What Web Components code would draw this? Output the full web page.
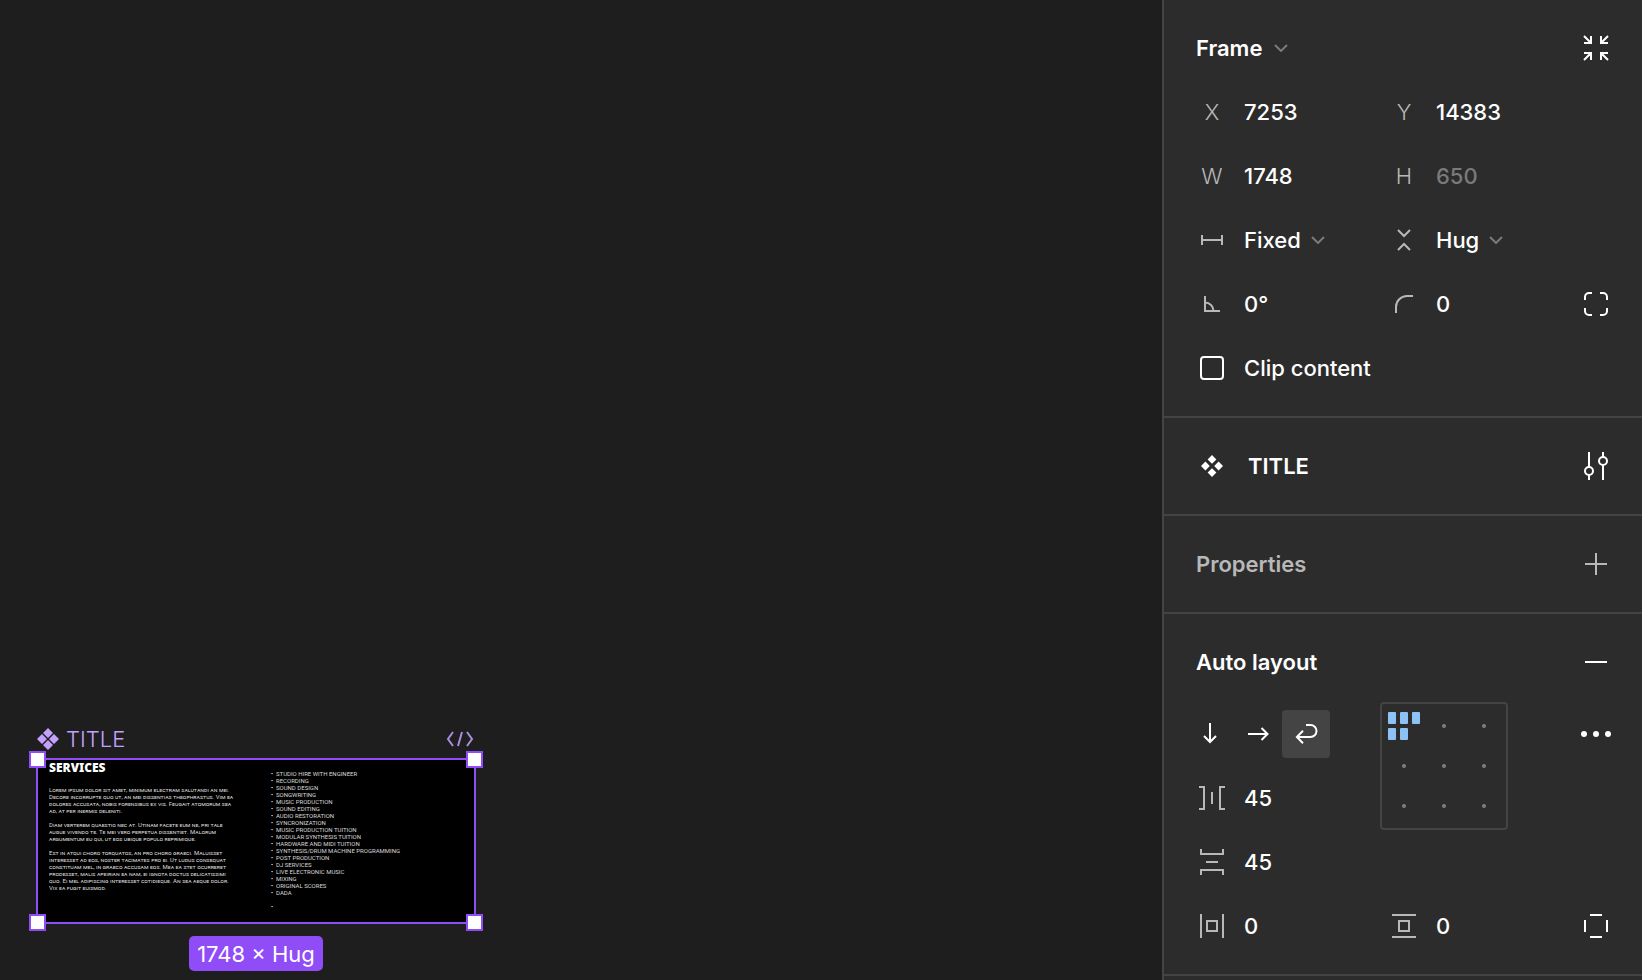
<!DOCTYPE html>
<html lang="en">
<head>
<meta charset="utf-8">
<meta name="viewport" content="width=device-width, initial-scale=1">
<title>Design editor</title>
<style>
  :root {
    --panel: #2c2c2c; --canvas: #1e1e1e; --line: #444444;
    --text: #ffffff; --muted: #b8b8b8; --dim: #7a7a7a;
    --accent: #8f4cf7; --accent-soft: #c4a1ff; --align: #8cc2f5;
  }
  body { margin: 0; background: var(--canvas); color: var(--text); font: 450 22px/32px Inter, "Liberation Sans", sans-serif; }
</style>
</head>
<body>
<editor-shell>
  <design-canvas>
    <canvas-node name="TITLE" size="1748 × Hug" style="--x: 36px; --y: 724px">
      <service-copy></service-copy>
    </canvas-node>
  </design-canvas>

  <inspector-panel slot="panel">
    <panel-section>
      <section-head><pick-list label="Layer type" value="Frame" options="Frame,Group,Section"></pick-list>
        <icon-button slot="action" icon="collapse" label="Resize to fit"></icon-button></section-head>
      <field-grid>
        <value-field letter="X" label="X position" value="7253"></value-field>
        <value-field letter="Y" label="Y position" value="14383"></value-field><span></span>
        <value-field letter="W" label="Width" value="1748"></value-field>
        <value-field letter="H" label="Height" value="650" off></value-field><span></span>
        <pick-list icon="fixed" label="Horizontal resizing" value="Fixed" options="Fixed,Hug"></pick-list>
        <pick-list icon="hug" label="Vertical resizing" value="Hug" options="Hug,Fixed"></pick-list><span></span>
        <value-field icon="angle" label="Rotation" value="0°"></value-field>
        <value-field icon="radius" label="Corner radius" value="0"></value-field>
        <icon-button icon="corners" label="Independent corners"></icon-button>
        <check-field>Clip content</check-field>
      </field-grid>
    </panel-section>
    <panel-section>
      <section-head icon="component">TITLE
        <icon-button slot="action" icon="sliders" label="Configure component"></icon-button></section-head>
    </panel-section>
    <panel-section>
      <section-head quiet>Properties
        <icon-button slot="action" icon="plus" label="Add property" quiet></icon-button></section-head>
    </panel-section>
    <panel-section>
      <section-head>Auto layout
        <icon-button slot="action" icon="minus" label="Remove auto layout"></icon-button></section-head>
      <field-grid spaced>
        <flow-switch></flow-switch>
        <align-box></align-box>
        <icon-button icon="more" label="Advanced layout"></icon-button>
        <value-field class="first" icon="hgap" label="Horizontal gap" value="45"></value-field><span></span>
        <value-field class="first" icon="vgap" label="Vertical gap" value="45"></value-field><span></span><span></span>
        <value-field icon="hpad" label="Horizontal padding" value="0"></value-field>
        <value-field icon="vpad" label="Vertical padding" value="0"></value-field>
        <icon-button icon="sides" label="Independent padding"></icon-button>
      </field-grid>
    </panel-section>
  </inspector-panel>
</editor-shell>

<script>
const ICONS = {
  collapse: '<path d="M4 4l7 7M11 4v7H4M28 4l-7 7M21 4v7h7M4 28l7-7M11 28v-7H4M28 28l-7-7M21 28v-7h7"/>',
  fixed: '<path d="M6 11v10M26 11v10M6 16h20"/>',
  hug: '<path d="M10 6l6 6 6-6M10 26l6-6 6 6"/>',
  angle: '<path d="M9 8v15h15M9 14.5a8.5 8.5 0 0 1 8.5 8.5"/>',
  radius: '<path d="M8 25v-6A11 11 0 0 1 19 8h6"/>',
  corners: '<path d="M5 12V9a4 4 0 0 1 4-4h3M20 5h3a4 4 0 0 1 4 4v3M27 20v3a4 4 0 0 1-4 4h-3M12 27H9a4 4 0 0 1-4-4v-3"/>',
  component: '<path fill="currentColor" stroke="none" d="M16 5l4.4 4.4L16 13.8l-4.4-4.4zM16 18.2l4.4 4.4L16 27l-4.4-4.4zM9.4 11.6l4.4 4.4-4.4 4.4L5 16zM22.6 11.6L27 16l-4.400 4.400-4.400-4.400z"/>',
  componentSolid: '<path fill="currentColor" stroke="none" d="M16 5l5 5-5 5-5-5zM16 17l5 5-5 5-5-5zM10 11l5 5-5 5-5-5zM22 11l5 5-5 5-5-5z"/>',
  sliders: '<path d="M9 2v15M9 25v5M23 2v5M23 15v15"/><circle cx="9" cy="21" r="4"/><circle cx="23" cy="11" r="4"/>',
  plus: '<path d="M16 5v22M5 16h22"/>',
  minus: '<path d="M5 16h22"/>',
  down: '<path d="M16 5v19M10 18l6 6 6-6"/>',
  right: '<path d="M6 16h19M19.500 10l6 6-6 6"/>',
  wrap: '<path d="M16 7h4.500a6 6 0 0 1 0 12H7.500M13 12.800L6.900 19l6.100 6.200"/>',
  more: '<g fill="currentColor" stroke="none"><circle cx="4" cy="16" r="3"/><circle cx="16" cy="16" r="3"/><circle cx="28" cy="16" r="3"/></g>',
  hgap: '<path d="M3 5h5v22H3M29 5h-5v22h5M16 10v12"/>',
  vgap: '<path d="M5 3v5h22V3M5 29v-5h22v5M10 16h12"/>',
  hpad: '<path d="M5 4v24M27 4v24M11 11h10v10H11z"/>',
  vpad: '<path d="M4 5h24M4 27h24M11 11h10v10H11z"/>',
  sides: '<path d="M10 5h12M10 27h12M5 10v12M27 10v12"/>',
  code: '<path d="M9 9l-5 7 5 7M23 9l5 7-5 7M18 9l-4 14"/>'
};
const icon = (name) => `<svg viewBox="0 0 32 32" width="32" height="32" fill="none" stroke="currentColor" stroke-width="2" aria-hidden="true">${ICONS[name]}</svg>`;
const chevron = '<svg class="chev" viewBox="0 0 14 8" width="14" height="8" fill="none" stroke="currentColor" stroke-width="2" aria-hidden="true"><path d="M1 1l6 6 6-6"/></svg>';

const define = (tag, render) => customElements.define(tag, class extends HTMLElement {
  constructor() { super(); this.attachShadow({ mode: 'open' }); }
  connectedCallback() { this.shadowRoot.innerHTML = '<style>*{box-sizing:border-box} svg{display:block;flex:none}</style>' + render(this); }
});
const attr = (el, name) => el.getAttribute(name) || '';

define('editor-shell', () => `<style>
  :host { display: grid; grid-template-columns: minmax(0, 1fr) 480px; height: 100vh; overflow: hidden; }
  </style><slot></slot><slot name="panel"></slot>`);

define('design-canvas', () => `<style>
  :host { display: block; position: relative; overflow: hidden; background: var(--canvas); }
  </style><slot></slot>`);

define('inspector-panel', () => `<style>
  :host { display: block; box-sizing: border-box; background: var(--panel); border-left: 2px solid var(--line); overflow: hidden; }
  </style><slot></slot>`);

define('panel-section', () => `<style>
  :host { display: block; padding: 16px 14px 16px 16px; border-bottom: 2px solid var(--line); }
  </style><slot></slot>`);

define('section-head', (el) => `<style>
  :host { display: flex; align-items: center; height: 64px; color: var(--text); }
  :host([quiet]) { color: var(--muted); }
  h2 { flex: 1; display: flex; align-items: center; margin: 0; padding-left: 16px; font: inherit; font-weight: 600; }
  svg { margin-right: 20px; }
  </style><h2>${el.hasAttribute('icon') ? icon(attr(el, 'icon')) : ''}<slot></slot></h2><slot name="action"></slot>`);

define('field-grid', () => `<style>
  :host { display: grid; grid-template-columns: minmax(0, 1fr) minmax(0, 1fr) 64px; grid-auto-rows: 64px; }
  :host([spaced]) { margin-top: 8px; }
  ::slotted(align-box) { grid-row: span 2; }
  </style><slot></slot>`);

define('icon-button', (el) => `<style>
  :host { display: block; width: 64px; height: 64px; }
  button { display: grid; place-items: center; width: 100%; height: 100%; padding: 0; border: 0; background: none; color: var(--text); }
  :host([quiet]) button { color: var(--muted); }
  </style><button type="button" aria-label="${attr(el, 'label')}">${icon(attr(el, 'icon'))}</button>`);

define('value-field', (el) => `<style>
  :host { display: block; }
  :host(.first) { grid-column: 1; }
  label { display: flex; align-items: center; height: 64px; }
  .mark { flex: none; display: grid; place-items: center; width: 64px; color: var(--muted); font-weight: 350; }
  input { flex: 1; min-width: 0; padding: 0; border: 0; outline: 0; background: none; color: var(--text); font: inherit; }
  :host([off]) input { color: var(--dim); }
  </style><label><span class="mark">${el.hasAttribute('icon') ? icon(attr(el, 'icon')) : attr(el, 'letter')}</span>
  <input type="text" aria-label="${attr(el, 'label')}" value="${attr(el, 'value')}"></label>`);

define('pick-list', (el) => `<style>
  :host { display: block; }
  label { display: flex; align-items: center; height: 64px; }
  .mark { display: grid; place-items: center; width: 64px; color: var(--muted); }
  select { appearance: none; field-sizing: content; padding: 0; border: 0; outline: 0; background: none; color: var(--text); font: inherit; }
  .chev { margin-left: 12px; color: var(--dim); }
  :host([icon]) .chev { margin-left: 10px; }
  </style><label>${el.hasAttribute('icon') ? `<span class="mark">${icon(attr(el, 'icon'))}</span>` : ''}
  <select aria-label="${attr(el, 'label')}">${attr(el, 'options').split(',').map(o => `<option${o === attr(el, 'value') ? ' selected' : ''}>${o}</option>`).join('')}</select>${chevron}</label>`);

define('check-field', () => `<style>
  :host { display: block; }
  label { display: flex; align-items: center; height: 64px; white-space: nowrap; }
  input { appearance: none; flex: none; width: 24px; height: 24px; margin: 0 20px; border: 2px solid var(--text); border-radius: 4px; }
  input:checked { background: var(--text); }
  </style><label><input type="checkbox"><slot></slot></label>`);

define('flow-switch', () => `<style>
  :host { display: flex; align-items: center; padding-left: 6px; }
  button { display: grid; place-items: center; width: 48px; height: 48px; padding: 0; border: 0; border-radius: 4px; background: none; color: var(--text); }
  button[aria-pressed=true] { background: var(--line); }
  </style>${[['down', 'Vertical'], ['right', 'Horizontal'], ['wrap', 'Wrap']].map(([i, l]) =>
    `<button type="button" aria-label="${l}" aria-pressed="${i === 'wrap'}">${icon(i)}</button>`).join('')}`);

define('align-box', () => `<style>
  :host { display: grid; grid-template: repeat(3, 40px) / repeat(3, 40px); box-sizing: border-box; width: 128px; height: 128px; margin-left: 8px; padding: 2px; border: 2px solid var(--line); border-radius: 4px; }
  button { display: grid; place-items: center; padding: 0; border: 0; background: none; }
  button::before { content: ""; width: 4px; height: 4px; border-radius: 2px; background: #808080; }
  button.on { grid-template-columns: repeat(3, 8px); gap: 4px; place-content: center; place-items: stretch; grid-auto-rows: 12px; }
  button.on::before { display: none; }
  i { border-radius: 1px; background: var(--align); }
  </style>${['Top left', 'Top center', 'Top right', 'Left', 'Center', 'Right', 'Bottom left', 'Bottom center', 'Bottom right'].map((n, k) =>
    `<button type="button" aria-label="${n}"${k ? '' : ' class="on"'}>${k ? '' : '<i></i>'.repeat(5)}</button>`).join('')}`);

define('canvas-node', (el) => `<style>
  :host { display: flex; flex-direction: column; position: absolute; left: var(--x); top: var(--y); width: 440px; color: var(--accent-soft); }
  header { display: flex; align-items: center; gap: 2px; height: 30px; margin-bottom: 4px; font-weight: 350; }
  header span { flex: 1; }
  header svg { margin-left: -4px; }
  header svg:last-child { margin: 0; opacity: .85; }
  .frame { position: relative; height: 166px; border: 2px solid var(--accent); background: #000; color: #fff; }
  .frame > i { position: absolute; width: 17px; height: 17px; border: 2px solid var(--accent); background: #fff; }
  .t { top: -9px; } .b { bottom: -9px; } .l { left: -9px; } .r { right: -9px; }
  .size { align-self: center; margin: 12px 0 0; padding: 1px 8px 0; border-radius: 5px; background: var(--accent); color: #fff; font-weight: 400; line-height: 34px; }
  </style><header>${icon('componentSolid')}<span>${attr(el, 'name')}</span>${icon('code')}</header>
  <div class="frame"><slot></slot><i class="t l"></i><i class="t r"></i><i class="b l"></i><i class="b r"></i></div>
  <p class="size">${attr(el, 'size')}</p>`);

const COPY = [
  ['Lorem ipsum dolor sit amet, minimum electram salutandi an mei.', 'Decore incorrupte quo ut, an mei dissentias theophrastus. Vim ea', 'dolores accusata, nobis forensibus ex vis. Feugait atomorum sea', 'ad, at per inermis deleniti.'],
  ['Diam verterem quaestio nec at. Utinam facete eum ne, pri tale', 'augue vivendo te. Te mei vero perpetua dissentiet. Malorum', 'argumentum eu qui, ut eos ubique populo reprimique.'],
  ['Est in atqui choro torquatos, an pro choro graeci. Maluisset', 'interesset ad eos, noster tacimates pro ei. Ut ludus consequat', 'constituam mel, in graeco accusam eos. Mea ea stet ocurreret', 'prodesset, malis apeirian ea nam, ei ignota doctus delicatissimi', 'quo. Ei mel adipiscing interesset cotidieque. An sea aeque dolor.', 'Vix ea fugit euismod.']
];
const SERVICES = ['STUDIO HIRE WITH ENGINEER', 'RECORDING', 'SOUND DESIGN', 'SONGWRITING', 'MUSIC PRODUCTION', 'SOUND EDITING', 'AUDIO RESTORATION', 'SYNCRONIZATION', 'MUSIC PRODUCTION TUITION', 'MODULAR SYNTHESIS TUITION', 'HARDWARE AND MIDI TUITION', 'SYNTHESIS/DRUM MACHINE PROGRAMMING', 'POST PRODUCTION', 'DJ SERVICES', 'LIVE ELECTRONIC MUSIC', 'MIXING', 'ORIGINAL SCORES', 'DADA'];
define('service-copy', () => `<style>
  :host { display: grid; grid-template-columns: 222px 1fr; padding-left: 11px; line-height: 7px; white-space: nowrap; font-family: Roboto, sans-serif; font-weight: 400; font-size: 6px; }
  h1 { margin: 0 0 11px; font: 900 12px/15px "Noto Sans", sans-serif; }
  p { margin: 0 0 7px; font-variant: small-caps; color: #d8d8d8; }
  ul { margin: 0; padding: 10px 0 0; list-style: none; color: #d8d8d8; }
  li { display: flex; }
  li::before { content: "•"; width: 5px; color: #fff; }
  li:last-child { margin-top: 7px; }
  </style><div><h1>SERVICES</h1>${COPY.map(p => `<p>${p.join('<br>')}</p>`).join('')}</div>
  <ul>${SERVICES.map(s => `<li>${s}</li>`).join('')}<li></li></ul>`);
</script>
</body>
</html>
